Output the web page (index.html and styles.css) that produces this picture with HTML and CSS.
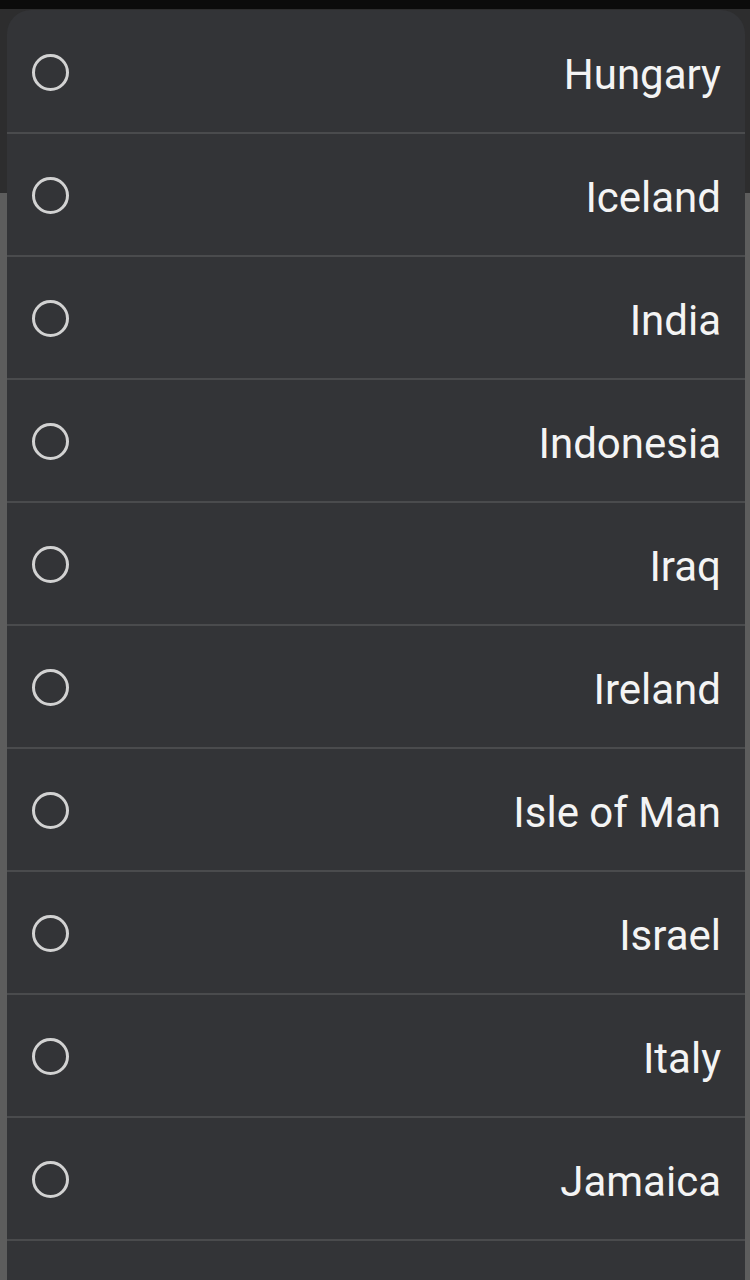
FILE: index.html
```html
<!DOCTYPE html>
<html lang="en">
<head>
<meta charset="utf-8">
<title>Country list</title>
<link rel="stylesheet" href="styles.css">
</head>
<body>
<div class="sheet">
  <ul class="list">
    <li class="row"><span class="radio"></span><span class="label">Hungary</span></li>
    <li class="row"><span class="radio"></span><span class="label">Iceland</span></li>
    <li class="row"><span class="radio"></span><span class="label">India</span></li>
    <li class="row"><span class="radio"></span><span class="label">Indonesia</span></li>
    <li class="row"><span class="radio"></span><span class="label">Iraq</span></li>
    <li class="row"><span class="radio"></span><span class="label">Ireland</span></li>
    <li class="row"><span class="radio"></span><span class="label">Isle of Man</span></li>
    <li class="row"><span class="radio"></span><span class="label">Israel</span></li>
    <li class="row"><span class="radio"></span><span class="label">Italy</span></li>
    <li class="row"><span class="radio"></span><span class="label">Jamaica</span></li>
    <li class="row"></li>
  </ul>
</div>
</body>
</html>
```
FILE: styles.css
```css
html, body {
  margin: 0;
  padding: 0;
  height: 1280px;
  overflow: hidden;
}
body {
  background: linear-gradient(#0b0b0b 0 9px, #2d2d2e 9px 193px, #5d5d5d 193px);
  font-family: Roboto, "Noto Sans", sans-serif;
}
.sheet {
  margin: 10px 5px 0 7px;
  background: #333437;
  border-radius: 24px 24px 0 0;
  height: 1270px;
  overflow: hidden;
}
.list {
  list-style: none;
  margin: 0;
  padding: 1px 0 0 0;
}
.row {
  display: flex;
  align-items: center;
  justify-content: space-between;
  height: 121px;
  border-bottom: 2px solid #4a4b4d;
  padding: 0 24px 0 25px;
}
.radio {
  box-sizing: border-box;
  width: 37px;
  height: 37px;
  border: 3px solid #d2d2d2;
  border-radius: 50%;
  margin-top: 1px;
}
.label {
  color: #f4f4f4;
  font-size: 42px;
  line-height: 1;
  padding-top: 6px;
}
```
